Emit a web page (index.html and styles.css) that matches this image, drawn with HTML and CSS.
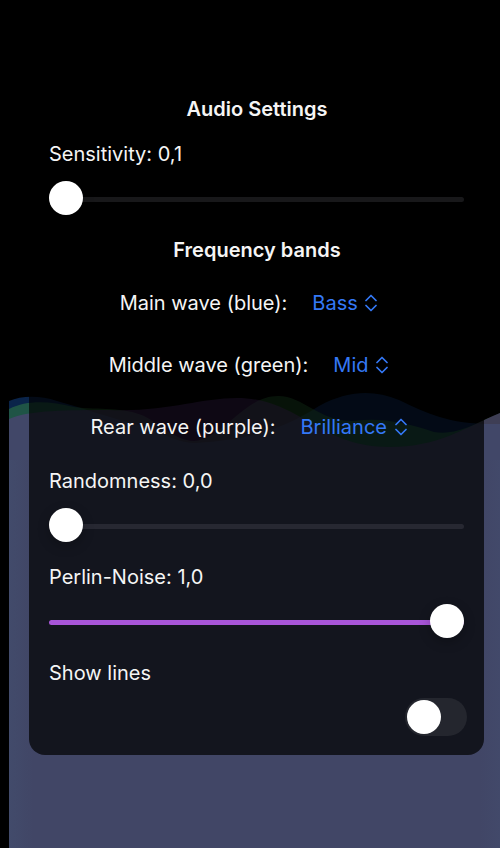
FILE: index.html
```html
<!DOCTYPE html>
<html lang="en">
<head>
<meta charset="utf-8">
<meta name="viewport" content="width=device-width, initial-scale=1">
<title>Audio Settings</title>
<link rel="stylesheet" href="styles.css">
</head>
<body>
<div class="waves" aria-hidden="true">
  <svg class="crests" viewBox="0 0 491 72" preserveAspectRatio="none">
    <path class="wave-blue" d="M0 13C12 8 30 7 48 13C80 22 95 28 130 37C160 48 170 55 187 55C235 52 270 44 310 18C340 2 365 2 390 12C420 26 440 37 491 36V72H0Z"/>
    <path class="wave-green" d="M0 21C18 12 40 13 65 19C90 22 115 19 135 28C155 38 165 52 185 53C215 50 235 8 269 8C295 8 310 34 345 33C375 29 400 36 425 44C450 48 470 33 491 25V72H0Z"/>
    <path class="wave-purple" d="M0 31C20 22 60 22 100 22C160 24 190 10 228 10C290 10 310 59 380 59C430 59 455 40 491 25V72H0Z"/>
  </svg>
  <div class="depth"></div>
</div>
<main class="panel">
  <h1 class="heading">Audio Settings</h1>
  <div class="field">
    <label for="sensitivity">Sensitivity: 0,1</label>
    <input class="slider" id="sensitivity" type="range" min="0" max="100" value="0">
  </div>
  <h2 class="heading">Frequency bands</h2>
  <div class="picks">
    <div class="pick">
      <label for="main">Main wave (blue):</label>
      <span class="choice"><select id="main"><option>Bass</option></select><svg class="chevrons" viewBox="0 0 12 18"><path d="M1 6.500 6 1.500l5 5M1 11.500 6 16.500l5-5"/></svg></span>
    </div>
    <div class="pick">
      <label for="middle">Middle wave (green):</label>
      <span class="choice"><select id="middle"><option>Mid</option></select><svg class="chevrons" viewBox="0 0 12 18"><path d="M1 6.500 6 1.500l5 5M1 11.500 6 16.500l5-5"/></svg></span>
    </div>
    <div class="pick">
      <label for="rear">Rear wave (purple):</label>
      <span class="choice"><select id="rear"><option>Brilliance</option></select><svg class="chevrons" viewBox="0 0 12 18"><path d="M1 6.500 6 1.500l5 5M1 11.500 6 16.500l5-5"/></svg></span>
    </div>
  </div>
  <div class="field">
    <label for="randomness">Randomness: 0,0</label>
    <input class="slider" id="randomness" type="range" min="0" max="100" value="0">
  </div>
  <div class="field">
    <label for="noise">Perlin-Noise: 1,0</label>
    <input class="slider full" id="noise" type="range" min="0" max="100" value="100">
  </div>
  <div class="field">
    <label for="lines">Show lines</label>
    <input class="switch" id="lines" type="checkbox" role="switch">
  </div>
</main>
</body>
</html>
```

FILE: styles.css
```css
* { box-sizing: border-box; }

body {
  position: relative;
  margin: 0;
  min-height: 100vh;
  padding: 72px 16px 93px 29px;
  background: #000;
  color: #f5f5f5;
  font: 20px/24px Inter, "Liberation Sans", sans-serif;
}

.waves {
  position: absolute;
  inset: 388px 0 0 9px;
  display: flex;
  flex-direction: column;
}

.crests { display: block; width: 100%; height: 72px; }
.wave-blue { fill: #0a244a; }
.wave-green { fill: #348442; fill-opacity: .5; }
.wave-purple { fill: #663a8e; fill-opacity: .48; }

.depth {
  flex: 1;
  background: linear-gradient(90deg, #424b6b, #414666 24px, #414666 calc(100% - 20px), #42496a);
}

.panel {
  position: relative;
  padding: 25px 16px 19px 20px;
  border-radius: 16px;
  background: rgb(0 0 0 / 70%);
}

.heading {
  margin: 0 3px 21px 0;
  font-size: 20px;
  line-height: 24px;
  font-weight: 600;
  text-align: center;
}

.field { display: flex; flex-direction: column; margin-bottom: 20px; }
.field:last-child { margin-bottom: 0; }

.slider {
  appearance: none;
  width: calc(100% - 4px);
  height: 36px;
  margin: 15px 0 1px;
  background: none;
}

.slider::-webkit-slider-runnable-track {
  height: 5px;
  border-radius: 3px;
  background: rgb(120 120 128 / 20%);
}

.slider.full::-webkit-slider-runnable-track { background: #a855d8; }

.slider::-webkit-slider-thumb {
  appearance: none;
  width: 34px;
  height: 34px;
  margin-top: -16px;
  border-radius: 50%;
  background: #fff;
  box-shadow: 0 4px 12px rgb(0 0 0 / 25%);
}

.picks { margin: -11px 20px 11px 0; }

.pick {
  display: flex;
  justify-content: center;
  align-items: center;
  gap: 25px;
  height: 62px;
}

.choice { display: flex; align-items: center; gap: 7px; }

select {
  appearance: none;
  padding: 0;
  border: 0;
  background: none;
  color: #3478f6;
  font: inherit;
}

.chevrons {
  width: 12px;
  height: 18px;
  fill: none;
  stroke: #3478f6;
  stroke-width: 1.7;
  stroke-linecap: round;
  stroke-linejoin: round;
}

.switch {
  appearance: none;
  align-self: flex-end;
  width: 62px;
  height: 38px;
  margin: 13px 1px 0 0;
  padding: 2px;
  border-radius: 19px;
  background: #24262e;
}

.switch::before {
  content: "";
  display: block;
  width: 34px;
  height: 34px;
  border-radius: 50%;
  background: #fff;
}

.switch:checked { background: #34c759; }
.switch:checked::before { margin-left: auto; }
```
